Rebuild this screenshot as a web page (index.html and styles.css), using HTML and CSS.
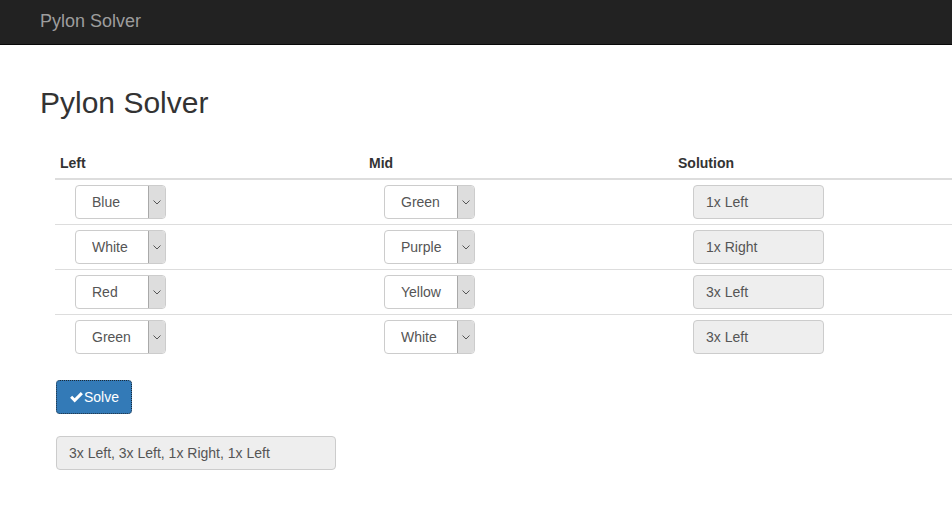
FILE: index.html
```html
<!DOCTYPE html>
<html lang="en">
<head>
<meta charset="utf-8">
<title>Pylon Solver</title>
<link rel="stylesheet" href="styles.css">
</head>
<body>
<nav class="navbar">
  <a class="brand" href="#">Pylon Solver</a>
</nav>
<main class="container">
  <h1 class="title">Pylon Solver</h1>
  <form class="solver">
    <table class="grid">
      <thead>
        <tr><th>Left</th><th>Mid</th><th>Solution</th></tr>
      </thead>
      <tbody>
        <tr>
          <td><div class="pick"><select class="pick-native"><option>Blue</option></select><span class="pick-arrow"><svg width="8" height="5" viewBox="0 0 8 5"><path d="M0.5 0.5 L4 4 L7.5 0.5" fill="none" stroke="#555" stroke-width="1"/></svg></span></div></td>
          <td><div class="pick"><select class="pick-native"><option>Green</option></select><span class="pick-arrow"><svg width="8" height="5" viewBox="0 0 8 5"><path d="M0.5 0.5 L4 4 L7.5 0.5" fill="none" stroke="#555" stroke-width="1"/></svg></span></div></td>
          <td><div class="out">1x Left</div></td>
        </tr>
        <tr>
          <td><div class="pick"><select class="pick-native"><option>White</option></select><span class="pick-arrow"><svg width="8" height="5" viewBox="0 0 8 5"><path d="M0.5 0.5 L4 4 L7.5 0.5" fill="none" stroke="#555" stroke-width="1"/></svg></span></div></td>
          <td><div class="pick"><select class="pick-native"><option>Purple</option></select><span class="pick-arrow"><svg width="8" height="5" viewBox="0 0 8 5"><path d="M0.5 0.5 L4 4 L7.5 0.5" fill="none" stroke="#555" stroke-width="1"/></svg></span></div></td>
          <td><div class="out">1x Right</div></td>
        </tr>
        <tr>
          <td><div class="pick"><select class="pick-native"><option>Red</option></select><span class="pick-arrow"><svg width="8" height="5" viewBox="0 0 8 5"><path d="M0.5 0.5 L4 4 L7.5 0.5" fill="none" stroke="#555" stroke-width="1"/></svg></span></div></td>
          <td><div class="pick"><select class="pick-native"><option>Yellow</option></select><span class="pick-arrow"><svg width="8" height="5" viewBox="0 0 8 5"><path d="M0.5 0.5 L4 4 L7.5 0.5" fill="none" stroke="#555" stroke-width="1"/></svg></span></div></td>
          <td><div class="out">3x Left</div></td>
        </tr>
        <tr>
          <td><div class="pick"><select class="pick-native"><option>Green</option></select><span class="pick-arrow"><svg width="8" height="5" viewBox="0 0 8 5"><path d="M0.5 0.5 L4 4 L7.5 0.5" fill="none" stroke="#555" stroke-width="1"/></svg></span></div></td>
          <td><div class="pick"><select class="pick-native"><option>White</option></select><span class="pick-arrow"><svg width="8" height="5" viewBox="0 0 8 5"><path d="M0.5 0.5 L4 4 L7.5 0.5" fill="none" stroke="#555" stroke-width="1"/></svg></span></div></td>
          <td><div class="out">3x Left</div></td>
        </tr>
      </tbody>
    </table>
    <button type="button" class="btn-solve"><svg class="ok" width="13" height="11" viewBox="0 0 14 12"><path d="M0 6.4 L2.3 4.1 L5 6.8 L11.7 0.1 L14 2.4 L5 11.4 Z" fill="#fff"/></svg>Solve</button>
    <div class="result">3x Left, 3x Left, 1x Right, 1x Left</div>
  </form>
</main>
</body>
</html>
```

FILE: styles.css
```css
html, body {
  overflow: hidden;
}
body {
  margin: 0;
  font-family: "Liberation Sans", Arial, sans-serif;
  font-size: 14px;
  line-height: 20px;
  color: #333;
  background: #fff;
}
.navbar {
  height: 44px;
  background: #222;
  border-bottom: 1px solid #080808;
  padding-left: 40px;
}
.brand {
  display: block;
  padding-top: 11px;
  font-size: 18px;
  line-height: 20px;
  color: #9d9d9d;
  text-decoration: none;
}
.container {
  padding: 0 0 0 40px;
}
.title {
  margin: 41px 0 29px;
  font-size: 30px;
  line-height: 33px;
  font-weight: 400;
  color: #333;
}
.solver {
  padding-left: 15px;
}
.grid {
  width: 927px;
  border-collapse: collapse;
  border-spacing: 0;
  table-layout: fixed;
  margin-bottom: 21px;
}
.grid th {
  text-align: left;
  font-weight: 700;
  padding: 5px;
  line-height: 20px;
  border-bottom: 2px solid #ddd;
}
.grid td {
  padding: 5px 5px 5px 20px;
  border-top: 1px solid #ddd;
  vertical-align: top;
}
.grid tbody tr:first-child td {
  border-top: 0;
}
.pick {
  display: flex;
  width: 89px;
  height: 32px;
  border: 1px solid #ccc;
  border-radius: 4px;
  background: #fff;
}
.pick-native {
  appearance: none;
  -webkit-appearance: none;
  flex: 1;
  min-width: 0;
  height: 32px;
  border: 0;
  margin: 0;
  padding: 0 0 0 16px;
  background: transparent;
  font-family: "Liberation Sans", Arial, sans-serif;
  font-size: 14px;
  color: #555;
  outline: none;
}
.pick-arrow {
  display: flex;
  align-items: center;
  justify-content: center;
  width: 16px;
  background: #ddd;
  border-left: 1px solid #a9a9a9;
  border-radius: 0 3px 3px 0;
}
.out {
  width: 105px;
  height: 32px;
  padding: 0 12px;
  border: 1px solid #ccc;
  border-radius: 4px;
  background: #eee;
  color: #555;
  line-height: 32px;
}
.btn-solve {
  display: flex;
  align-items: center;
  height: 34px;
  margin: 0 0 22px 1px;
  padding: 0 12px 0 13px;
  background: #337ab7;
  border: 1px dotted #1b2a38;
  border-radius: 4px;
  color: #fff;
  font-family: "Liberation Sans", Arial, sans-serif;
  font-size: 14px;
  line-height: 20px;
  cursor: pointer;
}
.ok {
  margin-right: 1px;
}
.result {
  width: 254px;
  height: 32px;
  margin-left: 1px;
  padding: 0 12px;
  border: 1px solid #ccc;
  border-radius: 4px;
  background: #eee;
  color: #555;
  line-height: 32px;
}
```
